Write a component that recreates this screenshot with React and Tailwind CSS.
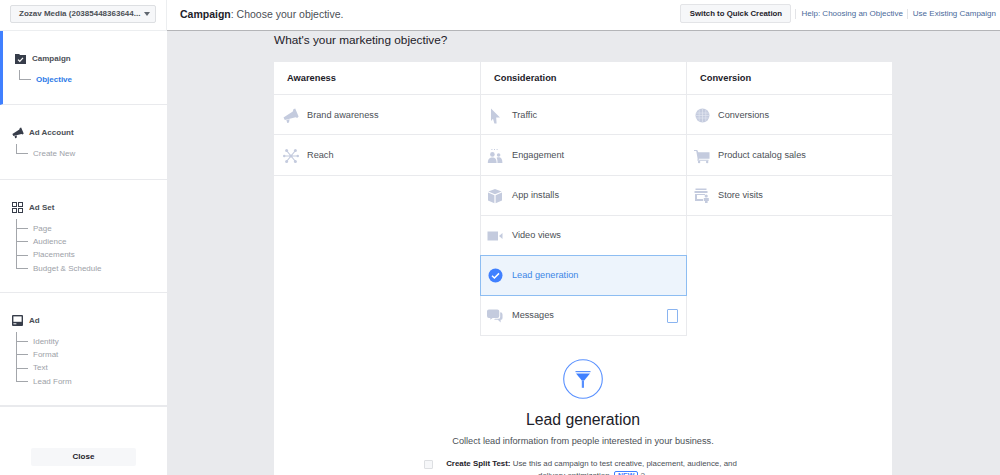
const ICON = '#c4cbde';

// Objective icons
const Megaphone = ({ fill = ICON, size = 16 }) => (
    <svg width={size} height={size} viewBox="0 0 16 16">
        <path d="M0.5 9.4 L9.8 3.4 L10.4 1.2 L12.2 0.6 L15.6 8.6 L14.2 10 L12.6 9.2 L1.8 12 Z" fill={fill} />
        <path d="M3.4 12 L6.6 11.2 L6 14.6 L4.2 15 Z" fill={fill} />
    </svg>
);

const Cursor = () => (
    <svg width="16" height="16" viewBox="0 0 16 16">
        <path d="M4 0.5 L13 9.4 L9.2 9.6 L9.6 15.5 L7.4 15.5 L6 10.8 L4 13 Z" fill={ICON} />
    </svg>
);

const Reach = () => (
    <svg width="16" height="16" viewBox="0 0 16 16" fill={ICON} stroke={ICON}>
        <path d="M8 8 L3.6 2.6 M8 8 L12.4 2.6 M8 8 L3.6 13.4 M8 8 L12.4 13.4 M8 8 L1 8 M8 8 L15 8" strokeWidth="1.1" />
        <circle cx="3.6" cy="2.6" r="1.5" stroke="none" />
        <circle cx="12.4" cy="2.6" r="1.5" stroke="none" />
        <circle cx="3.6" cy="13.4" r="1.5" stroke="none" />
        <circle cx="12.4" cy="13.4" r="1.5" stroke="none" />
        <circle cx="1.2" cy="8" r="1.2" stroke="none" />
        <circle cx="14.8" cy="8" r="1.2" stroke="none" />
        <circle cx="8" cy="8" r="1.5" stroke="none" />
    </svg>
);

const People = () => (
    <svg width="16" height="16" viewBox="0 0 16 16" fill={ICON}>
        <circle cx="5.4" cy="6.4" r="2.3" />
        <circle cx="11.6" cy="7" r="1.8" />
        <path d="M0.8 15 C0.8 11 2.6 9.4 5.4 9.4 C8.2 9.4 9.6 11 9.6 15 Z" />
        <path d="M10.4 15 C10.6 12.4 10.2 11 9.6 9.8 C10.2 9.4 10.9 9.3 11.6 9.3 C14 9.3 15.4 11 15.4 15 Z" />
        <path d="M4.4 1h1v1h-1z M7 1h1v1H7z M9.6 1h1v1h-1z" />
    </svg>
);

const Box = () => (
    <svg width="16" height="16" viewBox="0 0 16 16" fill={ICON}>
        <path d="M8 1 L14.6 3.6 L8 6.2 L1.4 3.6 Z" />
        <path d="M1 4.6 L7.4 7.2 L7.4 15.2 L1 12.4 Z" />
        <path d="M15 4.6 L8.6 7.2 L8.6 15.2 L15 12.4 Z" />
    </svg>
);

const Video = () => (
    <svg width="16" height="16" viewBox="0 0 16 16" fill={ICON}>
        <rect x="0.5" y="3.5" width="10.5" height="9" />
        <path d="M12 8 L15.5 5 L15.5 11 Z" />
    </svg>
);

const CheckCircle = () => (
    <svg width="15" height="15" viewBox="0 0 15 15">
        <circle cx="7.5" cy="7.5" r="7" fill="#4080ff" />
        <path d="M4 7.8 L6.4 10 L11 5.4" fill="none" stroke="#fff" strokeWidth="1.5" />
    </svg>
);

const Chat = () => (
    <svg width="17" height="16" viewBox="0 0 17 16" fill={ICON}>
        <path d="M2 1 H11 Q13 1 13 3 V8 Q13 10 11 10 H6 L3.5 12 V10 H2 Q0 10 0 8 V3 Q0 1 2 1 Z" />
        <path d="M14 4 Q16.5 4 16.5 6.5 V10 Q16.5 12 14.5 12 V15 L11.5 12 H7.5 L8.5 11 H12 Q14 11 14 9 Z" />
    </svg>
);

const Globe = () => (
    <svg width="15" height="15" viewBox="0 0 15 15">
        <circle cx="7.5" cy="7.5" r="7" fill={ICON} />
        <path d="M1 5 H14 M0.6 7.5 H14.4 M1 10 H14 M4.2 1.5 V13.5 M7.5 0.5 V14.5 M10.8 1.5 V13.5" stroke="#e6e9f2" strokeWidth="0.6" fill="none" />
    </svg>
);

const Cart = () => (
    <svg width="17" height="15" viewBox="0 0 17 15" fill={ICON}>
        <path d="M0 0.5 H3.4 L4.6 3 H16.5 V9.8 H5.2 L5 11 H15.5 V12 H3.6 L3.8 9.6 L2.4 1.6 H0 Z" />
        <circle cx="5.4" cy="13.4" r="1.3" />
        <circle cx="14" cy="13.4" r="1.3" />
    </svg>
);

const Store = () => (
    <svg width="16" height="15" viewBox="0 0 16 15" fill={ICON}>
        <path d="M1.5 0.5 H12.5 V2 H1.5 Z" />
        <path d="M0.5 3 H13.5 V5 H0.5 Z" />
        <path d="M1 6 H11 V7 H3 V11 H9 V13 H1 Z" />
        <circle cx="12.2" cy="8" r="1.6" />
        <path d="M9.8 10 H14.8 V13 H13.6 V15 H11 V13 H9.8 Z" />
    </svg>
);

// Sidebar icons
const FolderCheck = () => (
    <svg width="11" height="10" viewBox="0 0 11 10">
        <path d="M0 0 H4.2 L5 1 H11 V10 H0 Z" fill="#373d4a" />
        <path d="M3 5.6 L4.8 7.3 L8 3.8" fill="none" stroke="#fff" strokeWidth="1.2" />
    </svg>
);

const GridIcon = () => (
    <svg width="11" height="11" viewBox="0 0 11 11" fill="none" stroke="#373d4a" strokeWidth="1">
        <rect x="0.5" y="0.5" width="4" height="4" />
        <rect x="6.5" y="0.5" width="4" height="4" />
        <rect x="0.5" y="6.5" width="4" height="4" />
        <rect x="6.5" y="6.5" width="4" height="4" />
    </svg>
);

const AdIcon = () => (
    <svg width="11" height="11" viewBox="0 0 11 11">
        <rect width="11" height="11" rx="1" fill="#373d4a" />
        <rect x="1.4" y="1.4" width="8.2" height="5.4" fill="#fff" />
        <rect x="1.4" y="8" width="3" height="1.4" fill="#fff" opacity="0.7" />
    </svg>
);

const Funnel = () => (
    <svg width="40" height="40" viewBox="0 0 40 40">
        <circle cx="20" cy="20" r="19.3" fill="none" stroke="#5890ff" strokeWidth="1.1" />
        <rect x="12.5" y="12" width="15" height="1.2" fill="#5890ff" />
        <path d="M13 14.4 H27 L21.2 21.4 H18.8 Z" fill="#4080ff" />
        <rect x="18.8" y="21.4" width="2.2" height="7.4" fill="#5890ff" />
    </svg>
);

const sidebar = [
    { title: 'Campaign', icon: <FolderCheck />, steps: ['Objective'], active: true, h: 'h-[74px]', top: 'pt-[21px]', stepGap: 'mt-[8px]' },
    { title: 'Ad Account', icon: <Megaphone fill="#373d4a" size={12} />, steps: ['Create New'], h: 'h-[75px]', top: 'pt-[21px]', stepGap: 'mt-[8px]' },
    { title: 'Ad Set', icon: <GridIcon />, steps: ['Page', 'Audience', 'Placements', 'Budget & Schedule'], h: 'h-[113px]', top: 'pt-[21px]', stepGap: 'mt-[8px]' },
    { title: 'Ad', icon: <AdIcon />, steps: ['Identity', 'Format', 'Text', 'Lead Form'], h: 'h-[114px]', top: 'pt-[21px]', stepGap: 'mt-[8px]', last: true },
];

const columns = [
    {
        title: 'Awareness',
        rowPad: 'pl-[9px]',
        gap: 'ml-[8px]',
        rows: [
            { label: 'Brand awareness', icon: <Megaphone /> },
            { label: 'Reach', icon: <Reach /> },
        ],
    },
    {
        title: 'Consideration',
        rowPad: 'pl-[6px]',
        gap: 'ml-[9px]',
        sides: 'border-x',
        rows: [
            { label: 'Traffic', icon: <Cursor /> },
            { label: 'Engagement', icon: <People /> },
            { label: 'App installs', icon: <Box /> },
            { label: 'Video views', icon: <Video /> },
            { label: 'Lead generation', icon: <CheckCircle />, selected: true },
            { label: 'Messages', icon: <Chat />, device: true },
        ],
    },
    {
        title: 'Conversion',
        rowPad: 'pl-[7px]',
        gap: 'ml-[8px]',
        rows: [
            { label: 'Conversions', icon: <Globe /> },
            { label: 'Product catalog sales', icon: <Cart /> },
            { label: 'Store visits', icon: <Store /> },
        ],
    },
];

function SidebarSection({ section }) {
    return (
        <div className={`${section.h} ${section.top} shrink-0 border-[#e9eaed] ${section.last ? 'border-b-2' : 'border-b'} ${section.active ? 'border-l-[3px] border-l-[#4080ff]' : ''}`}>
            <div className="flex items-center h-[13px] pl-[12px]">
                <span className="w-[17px] flex items-center">{section.icon}</span>
                <span className="text-[8px] font-bold text-[#4b4f56]">{section.title}</span>
            </div>
            <div className={`${section.stepGap} ml-[16px] flex flex-col`}>
                {section.steps.map((step, i) => (
                    <div key={step} className="flex h-[13.3px] items-center">
                        <div className="relative w-[12px] h-full mr-[5px] shrink-0">
                            <span className={`absolute left-0 top-[-3px] w-px bg-[#a3a6ab] ${i === section.steps.length - 1 ? 'h-[10px]' : 'h-[17px]'}`} />
                            <span className="absolute left-0 top-[6px] w-[12px] h-px bg-[#a3a6ab]" />
                        </div>
                        <span className={`text-[8px] ${section.active ? 'font-bold text-[#2d7ae8]' : 'text-[#9da1a8]'}`}>{step}</span>
                    </div>
                ))}
            </div>
        </div>
    );
}

function ObjectiveRow({ row, col, index }) {
    const height = row.selected || index === 1 ? 'h-[41px]' : 'h-[40px]';
    return (
        <div className={`${height} flex items-center ${col.rowPad} ${index < 2 ? 'pt-[2px]' : ''} ${row.selected ? 'bg-[#edf4fc] border border-[#8dbdf2] -mx-px -mt-px' : 'border-b border-[#e9eaed]'}`}>
            <span className="w-[16px] h-[16px] flex items-center justify-center shrink-0">{row.icon}</span>
            <span className={`text-[9.2px] ${col.gap} ${row.selected ? 'text-[#3c86e6]' : 'text-[#4b4f56]'}`}>{row.label}</span>
            {row.device && <span className="ml-auto mr-[8px] w-[11px] h-[14px] border border-[#8ab4f0] rounded-[1px]" />}
        </div>
    );
}

export default function App() {
    return (
        <div className="h-[475px] w-[1000px] overflow-hidden flex flex-col bg-[#e9eaed] text-[#1d2129]" style={{ fontFamily: '"Liberation Sans", Arial, sans-serif' }}>
            {/* Header */}
            <header className="h-[31px] shrink-0 flex bg-white">
                <div className="w-[167px] shrink-0 flex items-start pl-[10px] pt-[5px] border-b border-r border-[#eceef0]">
                    <button className="w-[146px] h-[18px] flex items-center pl-[8px] bg-[#f6f7f9] border border-[#dddfe2] rounded-[2px] text-[8px] font-bold text-[#4b4f56] whitespace-nowrap">
                        Zozav Media (20385448363644...
                        <span className="ml-[4px] w-0 h-0 border-x-[3px] border-x-transparent border-t-[4px] border-t-[#606770]" />
                    </button>
                </div>
                <div className="flex-1 flex items-start pt-[4px] h-[31px] pl-[13px] border-b border-[#b4b5b8] text-[10.5px] text-[#4b4f56]">
                    <span className="h-[19px] mt-[1px] leading-[19px]"><b className="text-[#1d2129]">Campaign</b>: Choose your objective.</span>
                    <div className="ml-auto flex items-center h-[19px] pr-[4px]">
                        <button className="h-[19px] w-[111px] bg-[#f6f7f9] border border-[#e3e4e7] rounded-[2px] text-[7.8px] font-bold text-[#1d2129] mr-[4px]">Switch to Quick Creation</button>
                        <span className="h-[10px] w-px bg-[#e3e4e7] mr-[5px]" />
                        <span className="text-[8px] text-[#4a6a9a] mr-[4px]">Help: Choosing an Objective</span>
                        <span className="h-[10px] w-px bg-[#e3e4e7] mr-[5px]" />
                        <span className="text-[8px] text-[#4a6a9a]">Use Existing Campaign</span>
                    </div>
                </div>
            </header>

            <div className="flex-1 flex min-h-0">
                {/* Sidebar */}
                <aside className="w-[167px] shrink-0 bg-white flex flex-col">
                    {sidebar.map(section => (
                        <SidebarSection key={section.title} section={section} />
                    ))}
                    <div className="flex-1 flex items-end justify-center pb-[9px]">
                        <button className="w-[105px] h-[18px] bg-[#f6f7f9] rounded-[2px] text-[8px] font-bold text-[#1d2129]">Close</button>
                    </div>
                </aside>

                {/* Main */}
                <main className="flex-1 min-w-0 pl-[107px]">
                    <h2 className="h-[31px] text-[11.8px] leading-[18px] text-[#1d2129]">What's your marketing objective?</h2>
                    <div className="w-[618px] h-[500px] bg-white flex flex-col">
                        <div className="grid grid-cols-[206px_207px_205px] items-start">
                            {columns.map(col => (
                                <div key={col.title} className={`flex flex-col border-[#e9eaed] ${col.sides || ''}`}>
                                    <div className="h-[33px] pt-[2px] flex items-center border-b border-[#e9eaed] pl-[13px] text-[9.3px] font-bold text-[#1d2129]">{col.title}</div>
                                    {col.rows.map((row, i) => (
                                        <ObjectiveRow key={row.label} row={row} col={col} index={i} />
                                    ))}
                                </div>
                            ))}
                        </div>

                        {/* Selected objective */}
                        <div className="flex flex-col items-center mt-[23px]">
                            <Funnel />
                            <h3 className="mt-[11px] text-[15.8px] leading-[20px] text-[#1d2129]">Lead generation</h3>
                            <p className="mt-[5px] text-[9.2px] leading-[12px] text-[#4b4f56]">Collect lead information from people interested in your business.</p>
                            <div className="w-[318px] mt-[11px] flex items-start">
                                <span className="w-[9px] h-[9px] mt-[2px] bg-[#f6f7f9] border border-[#dddfe2] rounded-[1px] shrink-0" />
                                <p className="w-[293px] ml-[12px] text-[7.9px] leading-[12px] text-center text-[#4b4f56]">
                                    <b className="text-[#1d2129]">Create Split Test:</b> Use this ad campaign to test creative, placement, audience, and delivery optimization.{' '}
                                    <span className="border border-[#4080ff] rounded-[2px] px-[3px] text-[7px] font-bold text-[#4080ff]">NEW</span> ?
                                </p>
                            </div>
                        </div>
                    </div>
                </main>
            </div>
        </div>
    );
}
